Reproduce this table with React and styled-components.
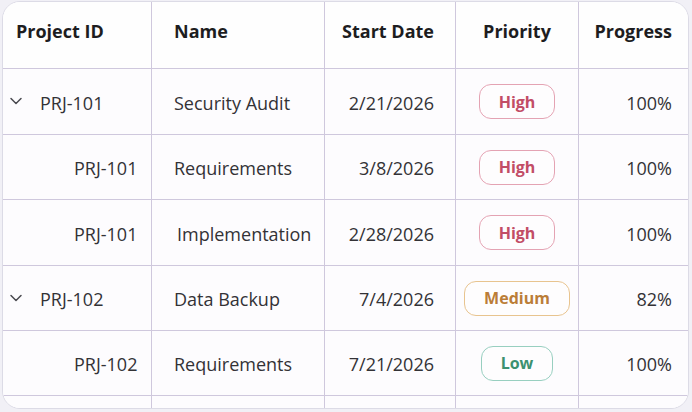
import React from 'react';
import styled, { createGlobalStyle } from 'styled-components';
import { ChevronDown } from 'lucide-react';

const GlobalStyle = createGlobalStyle`
  html, body {
    margin: 0;
    padding: 0;
    background: #f1f0f6;
  }
  body {
    font-family: 'Segoe UI', 'Open Sans', sans-serif;
  }
`;

const Page = styled.div`
  width: 692px;
  height: 412px;
  padding: 1px 3px 3px 2px;
  box-sizing: border-box;
`;

const Card = styled.div`
  height: 100%;
  background: #fdfcfe;
  border: 1px solid #dcdbe6;
  border-radius: 18px;
  overflow: hidden;
  box-sizing: border-box;
`;

const Row = styled.div`
  display: grid;
  grid-template-columns: 149px 173px 131px 123px 1fr;
  height: ${(p) => p.$h}px;
  border-bottom: 1px solid #cfc8dd;
  box-sizing: border-box;
  background: ${(p) => (p.$head ? '#fefefe' : '#fdfcfe')};
`;

const Cell = styled.div`
  display: flex;
  align-items: center;
  justify-content: ${(p) => p.$align || 'flex-start'};
  padding: ${(p) => p.$pad || '0'};
  padding-top: ${(p) => (p.$head ? '0' : '2px')};
  padding-bottom: ${(p) => (p.$head ? '8px' : '0')};
  border-right: ${(p) => (p.$last ? 'none' : '1px solid #cfc8dd')};
  color: ${(p) => (p.$head ? '#1d1d1f' : '#333236')};
  font-size: 18px;
  font-weight: ${(p) => (p.$head ? 700 : 400)};
  white-space: nowrap;
  box-sizing: border-box;
`;

const Toggle = styled.span`
  display: inline-flex;
  width: 20px;
  margin-top: -3px;
  margin-right: 14px;
  color: #4a4a50;
`;

const Badge = styled.span`
  display: inline-flex;
  align-items: center;
  justify-content: center;
  height: 35px;
  margin-top: -2px;
  padding: 0 19px;
  border-radius: 12px;
  border: 1px solid ${(p) => p.$border};
  color: ${(p) => p.$color};
  background: #fefdfe;
  font-size: 16px;
  font-weight: 700;
  box-sizing: border-box;
`;

const badgeColors = {
  High: { color: '#c24d66', border: '#e4a3b3' },
  Medium: { color: '#bb7d38', border: '#e8c48f' },
  Low: { color: '#3c9170', border: '#98cfc0' },
};

const rows = [
  { id: 'PRJ-101', name: 'Security Audit', date: '2/21/2026', pri: 'High', prog: '100%', parent: true, h: 66 },
  { id: 'PRJ-101', name: 'Requirements', date: '3/8/2026', pri: 'High', prog: '100%', h: 65 },
  { id: 'PRJ-101', name: 'Implementation', date: '2/28/2026', pri: 'High', prog: '100%', h: 66, nameShift: true },
  { id: 'PRJ-102', name: 'Data Backup', date: '7/4/2026', pri: 'Medium', prog: '82%', parent: true, h: 65 },
  { id: 'PRJ-102', name: 'Requirements', date: '7/21/2026', pri: 'Low', prog: '100%', h: 65 },
  { id: '', name: '', date: '', pri: null, prog: '', h: 65 },
];

export default function App() {
  return (
    <>
      <GlobalStyle />
      <Page>
        <Card>
          <Row $h={67} $head>
            <Cell $head $pad="0 0 0 13px">Project ID</Cell>
            <Cell $head $pad="0 0 0 22px">Name</Cell>
            <Cell $head $align="flex-end" $pad="0 21px 0 0">Start Date</Cell>
            <Cell $head $align="center">Priority</Cell>
            <Cell $head $last $align="flex-end" $pad="0 16px 0 0">Progress</Cell>
          </Row>
          {rows.map((r, i) => (
            <Row key={i} $h={r.h}>
              <Cell $pad={r.parent ? '0 0 0 3px' : '0 0 0 71px'}>
                {r.parent && (
                  <Toggle>
                    <ChevronDown size={20} strokeWidth={1.8} />
                  </Toggle>
                )}
                {r.id}
              </Cell>
              <Cell $pad={r.nameShift ? '0 0 0 25px' : '0 0 0 22px'}>{r.name}</Cell>
              <Cell $align="flex-end" $pad="0 21px 0 0">{r.date}</Cell>
              <Cell $align="center">
                {r.pri && (
                  <Badge $color={badgeColors[r.pri].color} $border={badgeColors[r.pri].border}>
                    {r.pri}
                  </Badge>
                )}
              </Cell>
              <Cell $last $align="flex-end" $pad="0 16px 0 0">{r.prog}</Cell>
            </Row>
          ))}
        </Card>
      </Page>
    </>
  );
}
